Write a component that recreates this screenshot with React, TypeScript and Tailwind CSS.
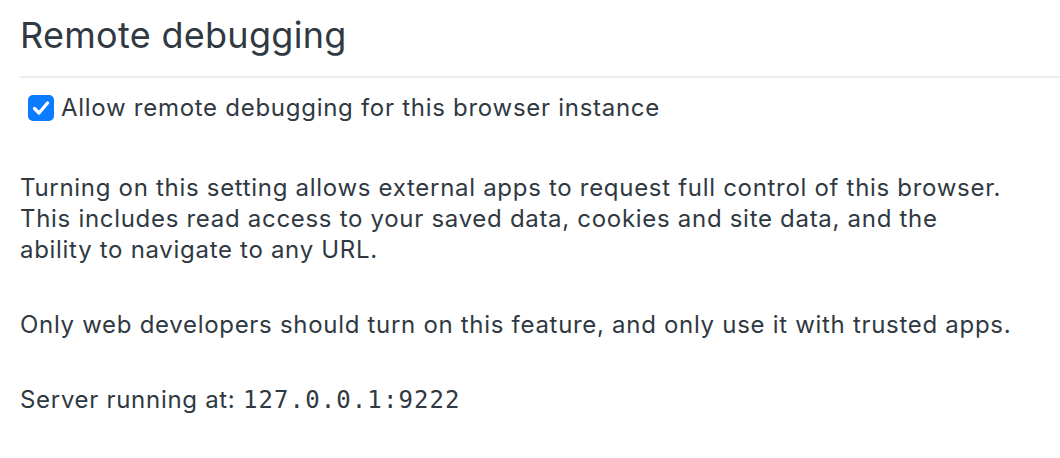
import React from "react";

export default function App() {
  return (
    <div
      className="w-[1060px] h-[458px] bg-white text-[#303942] overflow-hidden pl-[20px]"
      style={{ fontFamily: "Inter, 'Noto Sans', sans-serif" }}
    >
      <h1 className="text-[36px] leading-[44px] pt-[13px] pb-[19px] font-normal border-b-2 border-[#eeeeee] tracking-[0.3px]">
        Remote debugging
      </h1>
      <label className="flex items-center mt-[16px] ml-[8px] text-[24px] leading-[28px] tracking-[0.72px]">
        <span className="w-[26px] h-[26px] rounded-[5px] bg-[#0b7bff] flex items-center justify-center mr-[7px]">
          <svg width="20" height="20" viewBox="0 0 20 20" fill="none">
            <path d="M3.5 10.5 L8 15 L16.5 5" stroke="white" strokeWidth="3.2" strokeLinecap="round" strokeLinejoin="round" />
          </svg>
        </span>
        <span>Allow remote debugging for this browser instance</span>
      </label>
      <div className="mt-[50px] text-[24px] leading-[31px] tracking-[0.7px]">
        <div className="whitespace-nowrap">Turning on this setting allows external apps to request full control of this browser.</div>
        <div className="whitespace-nowrap">This includes read access to your saved data, cookies and site data, and the</div>
        <div className="whitespace-nowrap">ability to navigate to any URL.</div>
      </div>
      <div className="mt-[44px] text-[24px] leading-[31px] whitespace-nowrap tracking-[0.7px]">
        Only web developers should turn on this feature, and only use it with trusted apps.
      </div>
      <div className="mt-[44px] text-[24px] leading-[31px] whitespace-nowrap tracking-[0.7px]">
        Server running at:{" "}
        <span
          className="tracking-[1.1px]"
          style={{ fontFamily: "'DejaVu Sans Mono', 'Liberation Mono', monospace" }}
        >
          127.0.0.1:9222
        </span>
      </div>
    </div>
  );
}
